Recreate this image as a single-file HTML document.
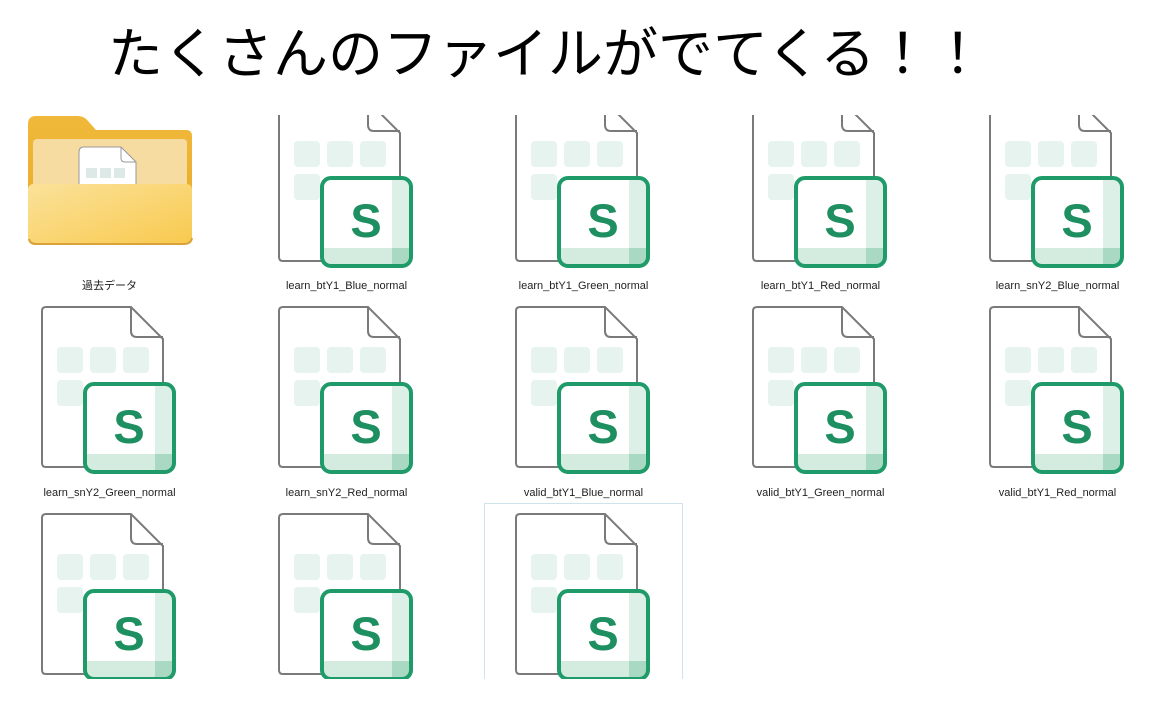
<!DOCTYPE html>
<html><head><meta charset="utf-8"><style>
html,body{margin:0;padding:0;background:#fff;width:1161px;height:710px;overflow:hidden;position:relative;font-family:"Liberation Sans","Noto Sans CJK JP",sans-serif}
.f{position:absolute;width:140px;height:172px}
.lbl{position:absolute;width:237px;text-align:center;font-size:11px;line-height:14px;color:#222}
.cover{position:absolute;left:0;width:1161px;background:#fff}
h1{position:absolute;left:108px;top:14px;margin:0;font-weight:normal;font-size:55px;line-height:80px;color:#000;white-space:nowrap;font-family:"Liberation Sans","Noto Sans CJK JP",sans-serif}
.sel{position:absolute;left:484px;top:503px;width:197px;height:190px;border:1px solid #cfe3ec}
</style></head><body>
<svg width="0" height="0" style="position:absolute">
<defs>
<symbol id="file" viewBox="0 0 140 172">
<path d="M2 6 Q2 2 6 2 H91 L123 34 V158 Q123 162 119 162 H6 Q2 162 2 158 Z" fill="#fff" stroke="#7a7a7a" stroke-width="2"/>
<path d="M91 2 V26 Q91 32 97 32 H123" fill="none" stroke="#7a7a7a" stroke-width="2"/>
<rect x="17" y="42" width="26" height="26" rx="4" fill="#e6f3ee"/>
<rect x="50" y="42" width="26" height="26" rx="4" fill="#e6f3ee"/>
<rect x="83" y="42" width="26" height="26" rx="4" fill="#e6f3ee"/>
<rect x="17" y="75" width="26" height="26" rx="4" fill="#e6f3ee"/>
<rect x="45" y="79" width="89" height="88" rx="9" fill="#fff"/>
<rect x="115" y="81" width="17" height="84" fill="#ddf0e7"/>
<rect x="47" y="149" width="85" height="16" fill="#d4ece0"/>
<rect x="115" y="149" width="17" height="16" fill="#a9d9c2"/>
<rect x="45" y="79" width="89" height="88" rx="9" fill="none" stroke="#1f9a69" stroke-width="4"/>
<text x="89" y="138" text-anchor="middle" font-family="Liberation Sans" font-weight="bold" font-size="47" fill="#1e8f61">S</text>
</symbol>
</defs></svg>

<svg class="f" style="left:277px;top:99px"><use href="#file"/></svg>
<svg class="f" style="left:514px;top:99px"><use href="#file"/></svg>
<svg class="f" style="left:751px;top:99px"><use href="#file"/></svg>
<svg class="f" style="left:988px;top:99px"><use href="#file"/></svg>
<svg class="f" style="left:40px;top:305px"><use href="#file"/></svg>
<svg class="f" style="left:277px;top:305px"><use href="#file"/></svg>
<svg class="f" style="left:514px;top:305px"><use href="#file"/></svg>
<svg class="f" style="left:751px;top:305px"><use href="#file"/></svg>
<svg class="f" style="left:988px;top:305px"><use href="#file"/></svg>
<div class="sel"></div>
<svg class="f" style="left:40px;top:512px"><use href="#file"/></svg>
<svg class="f" style="left:277px;top:512px"><use href="#file"/></svg>
<svg class="f" style="left:514px;top:512px"><use href="#file"/></svg>
<div class="cover" style="top:679px;height:31px"></div>

<div class="cover" style="top:0;height:115px"></div>
<h1>たくさんのファイルがでてくる！！</h1>

<svg style="position:absolute;left:28px;top:114px" width="166" height="132" viewBox="0 0 166 132">
<defs>
<linearGradient id="fb" x1="0" y1="0" x2="0" y2="1"><stop offset="0" stop-color="#f0b93a"/><stop offset="1" stop-color="#e9a92a"/></linearGradient>
<linearGradient id="ff" x1="0" y1="0" x2="1" y2="1"><stop offset="0" stop-color="#fbe29a"/><stop offset="1" stop-color="#f8c94e"/></linearGradient>
</defs>
<path d="M0 10 Q0 2 8 2 H50 Q56 2 60 7 L68 16 H158 Q164 16 164 22 V120 H0 Z" fill="url(#fb)"/>
<rect x="5" y="25" width="154" height="90" rx="4" fill="#f6dca0"/>
<path d="M51 38 Q51 33 56 33 H93 L108 48 V80 H51 Z" fill="#fff" stroke="#999" stroke-width="1"/>
<path d="M93 33 V44 Q93 48 97 48 H108" fill="none" stroke="#999" stroke-width="1"/>
<rect x="58" y="54" width="11" height="10" fill="#dde9e6"/><rect x="72" y="54" width="11" height="10" fill="#dde9e6"/><rect x="86" y="54" width="11" height="10" fill="#dde9e6"/>
<path d="M0 76 Q0 70 6 70 H158 Q164 70 164 76 V124 Q164 130 158 130 H6 Q0 130 0 124 Z" fill="url(#ff)"/>
<path d="M1 125 Q2 130 8 130 H156 Q163 130 164 124" fill="none" stroke="#d9a23a" stroke-width="2"/>
</svg>

<div class="lbl" style="left:-9px;top:279px">過去データ</div>
<div class="lbl" style="left:228px;top:279px">learn_btY1_Blue_normal</div>
<div class="lbl" style="left:465px;top:279px">learn_btY1_Green_normal</div>
<div class="lbl" style="left:702px;top:279px">learn_btY1_Red_normal</div>
<div class="lbl" style="left:939px;top:279px">learn_snY2_Blue_normal</div>
<div class="lbl" style="left:-9px;top:486px">learn_snY2_Green_normal</div>
<div class="lbl" style="left:228px;top:486px">learn_snY2_Red_normal</div>
<div class="lbl" style="left:465px;top:486px">valid_btY1_Blue_normal</div>
<div class="lbl" style="left:702px;top:486px">valid_btY1_Green_normal</div>
<div class="lbl" style="left:939px;top:486px">valid_btY1_Red_normal</div>
</body></html>
